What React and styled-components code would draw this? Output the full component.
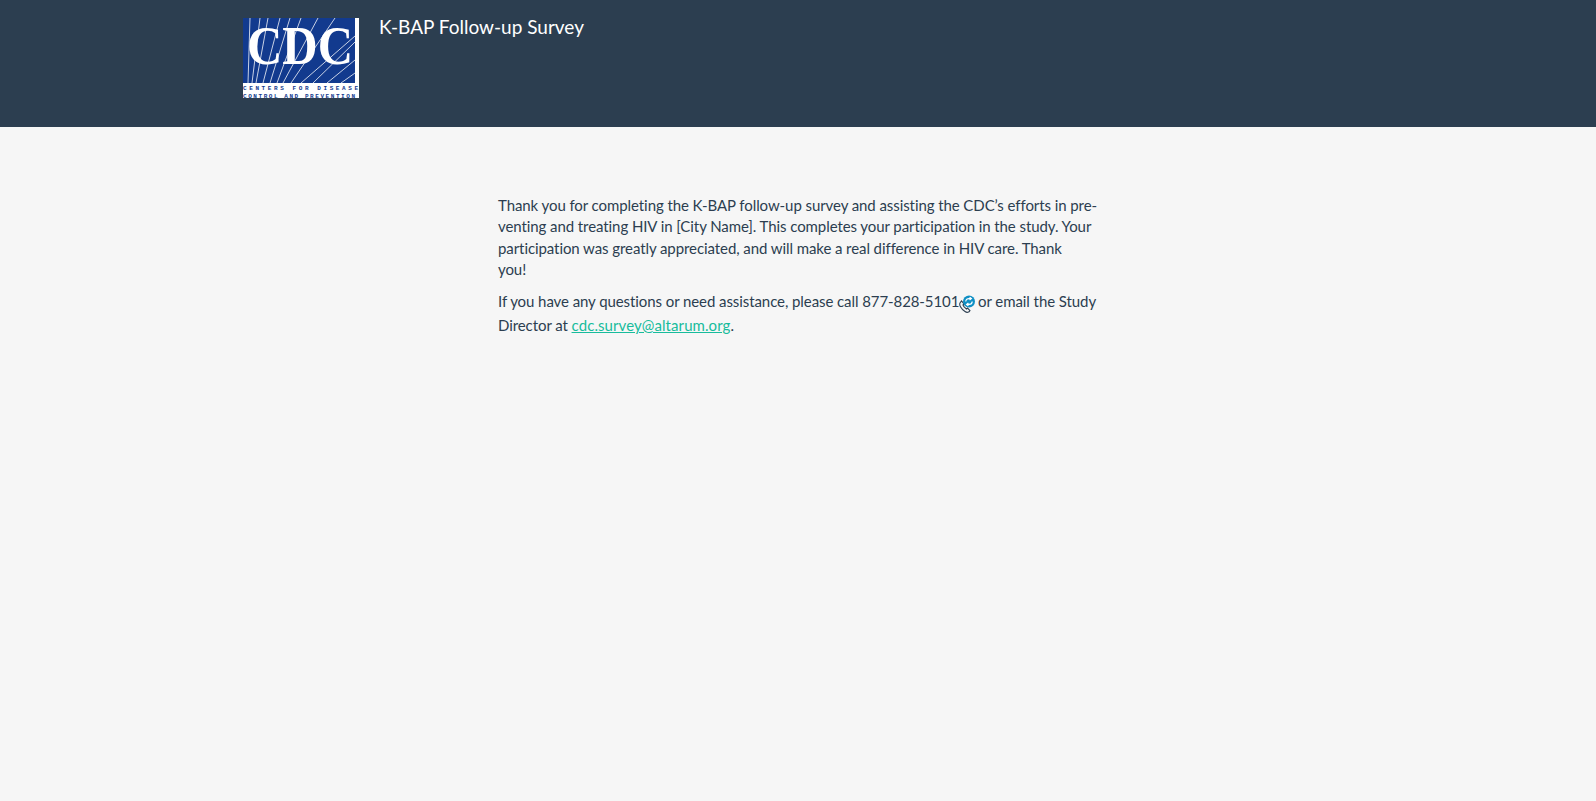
import styled, { createGlobalStyle } from "styled-components";

const GlobalStyle = createGlobalStyle`
  html, body {
    margin: 0;
    min-height: 100%;
    background: #f6f6f6;
  }
  body {
    font-family: Lato, "Open Sans", sans-serif;
    font-size: 15px;
    line-height: 1.42857;
    color: #2c3e50;
  }
`;

const Page = styled.div`
  min-height: 801px;
  background: #f6f6f6;
`;

const Header = styled.header`
  height: 127px;
  background: #2c3e50;
  padding: 18px 0 0 243px;
  box-sizing: border-box;
  display: flex;
  align-items: flex-start;
  gap: 20px;
`;

const Title = styled.h1`
  margin: -3px 0 0;
  font-size: 19px;
  font-weight: 400;
  line-height: 24px;
  color: #ffffff;
`;

const Main = styled.main`
  width: 604px;
  margin-left: 498px;
  padding-top: 68px;
  letter-spacing: -0.08px;
`;

const Paragraph = styled.p`
  margin: 0 0 10px;
`;

const MailLink = styled.a`
  color: #18bc9c;
  text-decoration: underline;
  letter-spacing: 0.08px;
`;

const CallIcon = styled.svg`
  display: inline-block;
  width: 17px;
  height: 18px;
  margin: 0 -1px 2px -1px;
  vertical-align: -8px;
`;

const CdcLogo = () => (
  <svg width="116" height="80" viewBox="0 0 116 80" style={{ display: "block", flex: "none" }}>
    <rect width="116" height="80" fill="#ffffff" />
    <rect width="112" height="65" fill="#123a8e" />
    <g stroke="#ffffff" strokeWidth="0.9" opacity="0.85">
      <path d="M5 65 L7 0" />
      <path d="M9 65 L17 0" />
      <path d="M13 65 L25 0" />
      <path d="M20 65 L37 0" />
      <path d="M27 65 L47 0" />
      <path d="M34 65 L58 0" />
      <path d="M40 65 L75 0" />
      <path d="M48 65 L92 0" />
      <path d="M58 65 L112 18" />
      <path d="M70 65 L112 24" />
      <path d="M84 65 L112 42" />
      <path d="M98 65 L112 55" />
    </g>
    <text
      x="4"
      y="46"
      fontFamily="'Liberation Serif', serif"
      fontWeight="700"
      fontSize="54"
      textLength="106"
      lengthAdjust="spacingAndGlyphs"
      fill="#ffffff"
    >
      CDC
    </text>
    <text
      x="0"
      y="72"
      fontFamily="'Liberation Mono', monospace"
      fontWeight="700"
      fontSize="6"
      textLength="115"
      lengthAdjust="spacing"
      fill="#123a8e"
    >
      CENTERS  FOR  DISEASE
    </text>
    <text
      x="0"
      y="79.5"
      fontFamily="'Liberation Mono', monospace"
      fontWeight="700"
      fontSize="6"
      textLength="112"
      lengthAdjust="spacing"
      fill="#123a8e"
    >
      CONTROL AND PREVENTION
    </text>
  </svg>
);

const CallBadge = () => (
  <CallIcon viewBox="0 0 17 18">
    <path
      d="M2 8 C1 10 3 14 7 16.5 C9 18 11 17.5 12 15.5 L9.5 13 L8.5 14 C7 13 5.5 11.5 5 10 L6 9 L3.5 6 Z"
      fill="#f6f6f6"
      stroke="#2c3e50"
      strokeWidth="1.1"
    />
    <circle cx="11" cy="6.5" r="6" fill="#0f8fc4" />
    <path
      d="M7.8 6.5 C7.8 4.6 9.4 3.6 11 3.6 H13 M11.6 2.2 L13.4 3.6 L11.6 5 M14.2 6.5 C14.2 8.4 12.6 9.4 11 9.4 H9 M10.4 8 L8.6 9.4 L10.4 10.8"
      fill="none"
      stroke="#ffffff"
      strokeWidth="1.2"
    />
  </CallIcon>
);

export default function App() {
  return (
    <Page>
      <GlobalStyle />
      <Header>
        <CdcLogo />
        <Title>K-BAP Follow-up Survey</Title>
      </Header>
      <Main>
        <Paragraph>
          Thank you for completing the K-BAP follow-up survey and assisting the CDC’s efforts in
          pre-venting and treating HIV in [City Name]. This completes your participation in the
          study. Your participation was greatly appreciated, and will make a real difference in
          HIV care. Thank
          <br />
          you!
        </Paragraph>
        <Paragraph>
          If you have any questions or need assistance, please call 877-828-5101
          <CallBadge /> or email the Study Director at{" "}
          <MailLink href="mailto:cdc.survey@altarum.org">cdc.survey@altarum.org</MailLink>.
        </Paragraph>
      </Main>
    </Page>
  );
}
